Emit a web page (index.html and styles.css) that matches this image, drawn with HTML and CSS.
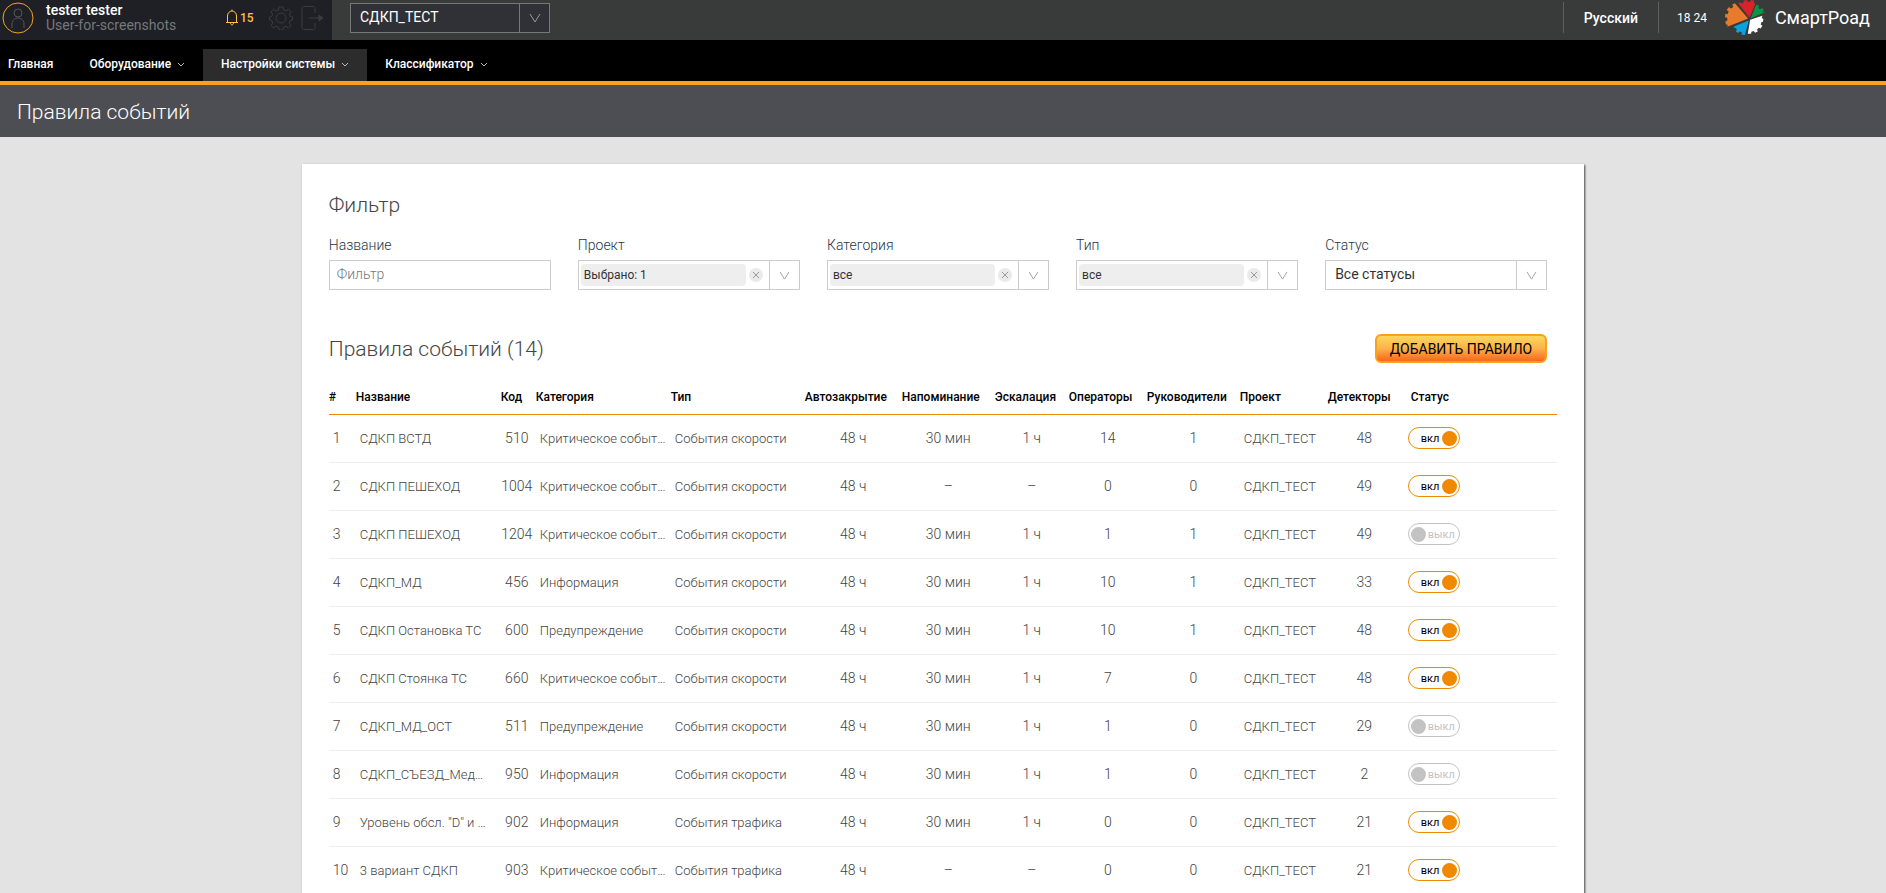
FILE: index.html
```
<!DOCTYPE html>
<html lang="ru">
<head>
    <meta charset="UTF-8">
    <meta name="viewport" content="width=device-width, initial-scale=1.0">
    <title>Правила событий</title>
    <link rel="stylesheet" href="styles.css">
</head>
<body>
<header class="topbar">
    <div class="user">
        <svg class="avatar" viewBox="0 0 32 32" width="32" height="32">
            <circle cx="16" cy="16" r="15" stroke="#f5a21f"/>
            <circle cx="16" cy="11" r="4" stroke="#55565a"/>
            <path d="M10 26v-4c0-4 3-6 6-6s6 2 6 6v4" stroke="#55565a"/>
        </svg>
        <div class="user-info">
            <div class="user-name">tester tester</div>
            <div class="user-role">User-for-screenshots</div>
        </div>
        <button type="button" class="icon-btn bell" aria-label="Уведомления">
            <svg viewBox="0 0 14 17" width="14" height="17">
                <path d="M1 13.5h12M2.500 13V7c0-3 2-5 4.500-5s4.500 2 4.500 5v6M7 2V.5M5.500 14c0 2.500 3 2.500 3 0"/>
            </svg>
            <span>15</span>
        </button>
        <button type="button" class="icon-btn gear" aria-label="Настройки">
            <svg viewBox="0 0 24 24" width="24" height="24">
                <circle cx="12" cy="12" r="5"/>
                <path d="M10 1h4l.5 3 2.500 1 2.500-2 2.500 2.800-1.700 2.400 1 2.300 2.200.5v3l-2.200.5-1 2.500 1.700 2.500-2.700 2.500-2.300-1.700-2.500 1-.5 2.700h-4l-.5-2.700-2.500-1-2.300 1.700L2 19.500 3.700 17l-1-2.500-2.200-.5v-3l2.200-.5 1-2.300L2 5.800 4.500 3 7 5l2.500-1z"/>
            </svg>
        </button>
        <button type="button" class="icon-btn" aria-label="Выход">
            <svg viewBox="0 0 23 24" width="23" height="24">
                <path d="M14 7V2.500C14 1 13.500.5 12 .5H3C1.500.5 1 1 1 2.500v19C1 23 1.500 23.500 3 23.500h9c1.500 0 2-.5 2-2V17M8 12h13"/>
                <path d="M18 9l4 3-4 3z" fill="#3b3c3f"/>
            </svg>
        </button>
    </div>
    <div class="select project-select">
        <select aria-label="Проект">
            <option>СДКП_ТЕСТ</option>
        </select>
        <span class="arrow"><svg viewBox="0 0 12 10" width="12" height="10"><path d="M1 1l5 8 5-8"/></svg></span>
    </div>
    <button type="button" class="lang">Русский</button>
    <div class="clock">18 24</div>
    <a href="#" class="logo">
        <svg viewBox="0 0 124 110" width="41" height="37">
            <path fill="#e87a2b" d="M70 58L30 12l-8 4 3 7-7 5-6-5-7 9 6 5-3 8-7-1-1 10 7 2v8l-6 3 2 9 5 1-1 6z"/>
            <path fill="#d9222c" d="M74 56L40 12l8-3 2 4 6-2V4l11-2 1 6h8l2-6 10 2-1 7 5 2z"/>
            <path fill="#0c9444" d="M78 57l14-35 4-6 7 4-2 6 4 4 8-4 4 7-5 4 10 1z"/>
            <path fill="#ffffff" d="M76 62l37-12-2 7 5 2-1 9-5 1-2 7 5 4-5 8-6-2-5 5 2 6-8 4-4-5-7 2-1 6H69z"/>
            <path fill="#0ba1dc" d="M72 64L60 108l-10-1 1-7-6-3-6 5-6-5 3-6-4-4-5-2v-3z"/>
        </svg>
        <span>СмартРоад</span>
    </a>
</header>

<nav class="menu">
    <a href="#">Главная</a>
    <a href="#">Оборудование <svg viewBox="0 0 8 5" width="8" height="5"><path d="M1 1l3 3 3-3"/></svg></a>
    <a href="#" class="active">Настройки системы <svg viewBox="0 0 8 5" width="8" height="5"><path d="M1 1l3 3 3-3"/></svg></a>
    <a href="#">Классификатор <svg viewBox="0 0 8 5" width="8" height="5"><path d="M1 1l3 3 3-3"/></svg></a>
</nav>

<h1 class="page-title">Правила событий</h1>

<main>
    <div class="card">
        <h2>Фильтр</h2>
        <form class="filters">
            <div class="field">
                <label for="name">Название</label>
                <input type="text" id="name" class="text-input" placeholder="Фильтр">
            </div>
            <div class="field">
                <label for="project">Проект</label>
                <div class="select multi">
                    <select id="project"><option>Выбрано: 1</option></select>
                    <button type="button" class="clear" aria-label="Очистить"><svg viewBox="0 0 6 6" width="6" height="6"><path d="M0 0l6 6M6 0L0 6"/></svg></button>
                    <span class="arrow"><svg viewBox="0 0 12 10" width="11" height="9"><path d="M1 1l5 8 5-8"/></svg></span>
                </div>
            </div>
            <div class="field">
                <label for="category">Категория</label>
                <div class="select multi">
                    <select id="category"><option>все</option></select>
                    <button type="button" class="clear" aria-label="Очистить"><svg viewBox="0 0 6 6" width="6" height="6"><path d="M0 0l6 6M6 0L0 6"/></svg></button>
                    <span class="arrow"><svg viewBox="0 0 12 10" width="11" height="9"><path d="M1 1l5 8 5-8"/></svg></span>
                </div>
            </div>
            <div class="field">
                <label for="type">Тип</label>
                <div class="select multi">
                    <select id="type"><option>все</option></select>
                    <button type="button" class="clear" aria-label="Очистить"><svg viewBox="0 0 6 6" width="6" height="6"><path d="M0 0l6 6M6 0L0 6"/></svg></button>
                    <span class="arrow"><svg viewBox="0 0 12 10" width="11" height="9"><path d="M1 1l5 8 5-8"/></svg></span>
                </div>
            </div>
            <div class="field">
                <label for="status">Статус</label>
                <div class="select">
                    <select id="status"><option>Все статусы</option></select>
                    <span class="arrow"><svg viewBox="0 0 12 10" width="11" height="9"><path d="M1 1l5 8 5-8"/></svg></span>
                </div>
            </div>
        </form>

        <div class="list-head">
            <h2>Правила событий (14)</h2>
            <button type="button" class="btn-add">ДОБАВИТЬ ПРАВИЛО</button>
        </div>

        <table class="rules">
            <thead>
            <tr>
                <th class="col-num">#</th>
                <th class="col-name">Название</th>
                <th class="col-code">Код</th>
                <th class="col-category">Категория</th>
                <th class="col-type">Тип</th>
                <th class="col-close">Автозакрытие</th>
                <th class="col-remind">Напоминание</th>
                <th class="col-escalation">Эскалация</th>
                <th class="col-operators">Операторы</th>
                <th class="col-managers">Руководители</th>
                <th class="col-project">Проект</th>
                <th class="col-detectors">Детекторы</th>
                <th class="col-status">Статус</th>
            </tr>
            </thead>
            <tbody id="rules"></tbody>
        </table>
    </div>
</main>

<script src="script.js"></script>
</body>
</html>
```
FILE: styles.css
```
* {
    box-sizing: border-box;
}

body {
    display: flex;
    flex-direction: column;
    height: 100vh;
    margin: 0;
    background-color: #e3e3e3;
    color: #444;
    font-family: Roboto, "Liberation Sans", sans-serif;
    font-size: 14px;
    font-weight: 300;
}

button, input, select {
    font: inherit;
}

button {
    padding: 0;
    border: none;
    background: none;
    cursor: pointer;
}

a {
    color: inherit;
    text-decoration: none;
}

svg {
    flex: none;
    fill: none;
    stroke: currentColor;
}

/* Top bar */
.topbar {
    display: flex;
    align-items: center;
    flex: none;
    height: 40px;
    padding-bottom: 5px;
    background-color: #393b3a;
    color: #fff;
}

.user {
    display: flex;
    align-items: center;
    align-self: flex-start;
    width: 332px;
    height: 40px;
    padding: 0 8px 5px 2px;
    background-color: #1e2025;
}

.user-info {
    width: 179px;
    margin-left: 12px;
    line-height: 15px;
}

.user-name {
    font-weight: 500;
}

.user-role {
    color: #77787b;
    font-weight: 400;
}

.icon-btn {
    display: flex;
    align-items: center;
    color: #3b3c3f;
}

.bell {
    gap: 1px;
    width: 44px;
    color: #ffc04c;
    font-size: 12px;
    font-weight: 500;
}

.gear {
    width: 32px;
}

/* Drop-downs */
.select {
    display: flex;
    align-items: center;
    height: 30px;
    border: 1px solid #ccc;
    background-color: #fff;
    color: #333;
    font-weight: 400;
}

.select select {
    flex: 1;
    min-width: 0;
    height: 100%;
    padding: 0 9px 2px;
    border: none;
    appearance: none;
    background: none;
    color: inherit;
}

.arrow {
    display: flex;
    align-items: center;
    justify-content: center;
    flex: none;
    width: 30px;
    height: 100%;
    border-left: 1px solid #ccc;
    color: #999;
}

.select.multi select {
    height: 22px;
    margin-left: 2px;
    padding: 0 3px;
    border-radius: 4px;
    background-color: #eee;
    font-size: 12px;
}

.clear {
    display: flex;
    align-items: center;
    justify-content: center;
    width: 14px;
    height: 14px;
    margin: 0 6px 0 3px;
    border-radius: 50%;
    background-color: #eaeaea;
    color: #999;
}

.project-select {
    width: 200px;
    margin: 0 auto 0 18px;
    border-color: #77787a;
    background-color: #303136;
    color: #fff;
}

.project-select .arrow {
    border-color: #77787a;
}

.lang, .clock {
    display: flex;
    align-items: center;
    height: 31px;
    padding: 0 20px;
    border-left: 1px solid #5f6160;
    color: #fff;
    font-weight: 500;
}

.clock {
    padding: 0 18px;
    font-size: 12px;
    font-weight: 400;
}

.logo {
    display: flex;
    align-items: center;
    gap: 9px;
    padding-right: 16px;
    font-size: 18px;
    font-weight: 400;
}

.logo svg {
    stroke: none;
}

/* Main menu */
.menu {
    display: flex;
    align-items: flex-end;
    flex: none;
    height: 45px;
    border-bottom: 4px solid #f9a11b;
    background-color: #000;
    color: #fff;
    font-size: 12px;
    font-weight: 500;
}

.menu a {
    padding: 0 18px 2px;
    line-height: 30px;
}

.menu a:first-child {
    padding-left: 8px;
}

.menu .active {
    background-color: #2c2c2c;
}

.menu svg {
    margin: 0 0 1px 3px;
    color: #bbb;
}

.page-title {
    flex: none;
    margin: 0;
    padding: 2px 17px 0;
    background-color: #4d4e53;
    color: #fff;
    font-size: 21px;
    font-weight: 300;
    line-height: 50px;
}

/* Content */
main {
    flex: 1;
    min-height: 0;
    padding-top: 27px;
    overflow-y: auto;
    scrollbar-width: none;
}

.card {
    width: 68%;
    min-height: 100%;
    margin: 0 auto;
    padding: 27px;
    background-color: #fff;
    box-shadow: 1px 1px 2px #444;
}

h2 {
    margin: 0;
    font-size: 21px;
    font-weight: 300;
    line-height: 28px;
}

.filters {
    display: grid;
    grid-template-columns: repeat(5, 1fr);
    gap: 27px;
    margin: 16px 10px 44px 0;
}

.field label {
    display: block;
    margin-bottom: 5px;
    color: #263646;
    line-height: 20px;
}

.text-input {
    display: block;
    width: 100%;
    height: 30px;
    padding: 0 7px 2px;
    border: 1px solid #ccc;
    color: #333;
}

.text-input::placeholder {
    color: #777;
}

.list-head {
    display: flex;
    align-items: center;
    justify-content: space-between;
    margin-right: 10px;
}

.btn-add {
    height: 29px;
    padding: 0 13px;
    border: 2px solid #f9a11b;
    border-radius: 6px;
    background: linear-gradient(#fcd75c, #fbb24a 50%, #f9671d);
    color: #000;
    font-weight: 400;
}

/* Rules table */
.rules {
    width: 100%;
    margin-top: 18px;
    border-collapse: collapse;
    table-layout: fixed;
    white-space: nowrap;
}

.rules th {
    height: 33px;
    padding: 0;
    border-bottom: 1px solid #ef8a00;
    color: #000;
    font-size: 12px;
    font-weight: 500;
    text-align: left;
}

.rules td {
    height: 48px;
    padding: 0;
    border-bottom: 1px solid #eee;
    text-align: center;
}

.rules .text {
    padding-left: 4px;
    font-size: 13px;
    text-align: left;
}

.rules .num {
    padding-left: 4px;
    text-align: left;
}

.rules .code {
    padding-right: 3px;
}

.rules .toggle {
    padding-left: 7px;
}

.col-num { width: 27px; }
.col-name { width: 145px; }
.col-code { width: 35px; }
.col-category { width: 135px; }
.col-type { width: 134px; }
.col-close { width: 97px; }
.col-remind { width: 93px; }
.col-escalation { width: 74px; }
.col-operators { width: 78px; }
.col-managers { width: 93px; }
.col-project { width: 88px; }
.col-detectors { width: 73px; }

.rules .col-status {
    padding-left: 10px;
}

.switch {
    display: flex;
    align-items: center;
    justify-content: space-between;
    width: 52px;
    height: 22px;
    padding: 0 4px 0 2px;
    border: 1px solid #c3c3c3;
    border-radius: 11px;
    color: #c3c3c3;
    font-size: 11px;
    font-weight: 400;
    cursor: pointer;
}

.switch input {
    flex: none;
    width: 15px;
    height: 15px;
    margin: 0;
    border-radius: 50%;
    appearance: none;
    background-color: #c3c3c3;
}

.switch:has(:checked) {
    flex-direction: row-reverse;
    padding: 0 2px 0 12px;
    border-color: #ef8a00;
    color: #000;
}

.switch input:checked {
    background-color: #ef8a00;
}
```
FILE: script.js
```
// name, code, category, type, auto close, reminder, escalation, operators, managers, detectors, enabled
const rules = [
    ['СДКП ВСТД', 510, 'Критическое событ…', 'События скорости', '48 ч', '30 мин', '1 ч', 14, 1, 48, true],
    ['СДКП ПЕШЕХОД', 1004, 'Критическое событ…', 'События скорости', '48 ч', '–', '–', 0, 0, 49, true],
    ['СДКП ПЕШЕХОД', 1204, 'Критическое событ…', 'События скорости', '48 ч', '30 мин', '1 ч', 1, 1, 49, false],
    ['СДКП_МД', 456, 'Информация', 'События скорости', '48 ч', '30 мин', '1 ч', 10, 1, 33, true],
    ['СДКП Остановка ТС', 600, 'Предупреждение', 'События скорости', '48 ч', '30 мин', '1 ч', 10, 1, 48, true],
    ['СДКП Стоянка ТС', 660, 'Критическое событ…', 'События скорости', '48 ч', '30 мин', '1 ч', 7, 0, 48, true],
    ['СДКП_МД_ОСТ', 511, 'Предупреждение', 'События скорости', '48 ч', '30 мин', '1 ч', 1, 0, 29, false],
    ['СДКП_СЪЕЗД_Мед…', 950, 'Информация', 'События скорости', '48 ч', '30 мин', '1 ч', 1, 0, 2, false],
    ['Уровень обсл. "D" и …', 902, 'Информация', 'События трафика', '48 ч', '30 мин', '1 ч', 0, 0, 21, true],
    ['3 вариант СДКП', 903, 'Критическое событ…', 'События трафика', '48 ч', '–', '–', 0, 0, 21, true]
];

document.getElementById('rules').innerHTML = rules.map((r, i) => `
    <tr>
        <td class="num">${i + 1}</td>
        <td class="text">${r[0]}</td>
        <td class="code">${r[1]}</td>
        <td class="text">${r[2]}</td>
        <td class="text">${r[3]}</td>
        <td>${r[4]}</td>
        <td>${r[5]}</td>
        <td>${r[6]}</td>
        <td>${r[7]}</td>
        <td>${r[8]}</td>
        <td class="text">СДКП_ТЕСТ</td>
        <td>${r[9]}</td>
        <td class="toggle">
            <label class="switch">
                <input type="checkbox" ${r[10] ? 'checked' : ''}>
                <span>${r[10] ? 'вкл' : 'выкл'}</span>
            </label>
        </td>
    </tr>`).join('');
```
